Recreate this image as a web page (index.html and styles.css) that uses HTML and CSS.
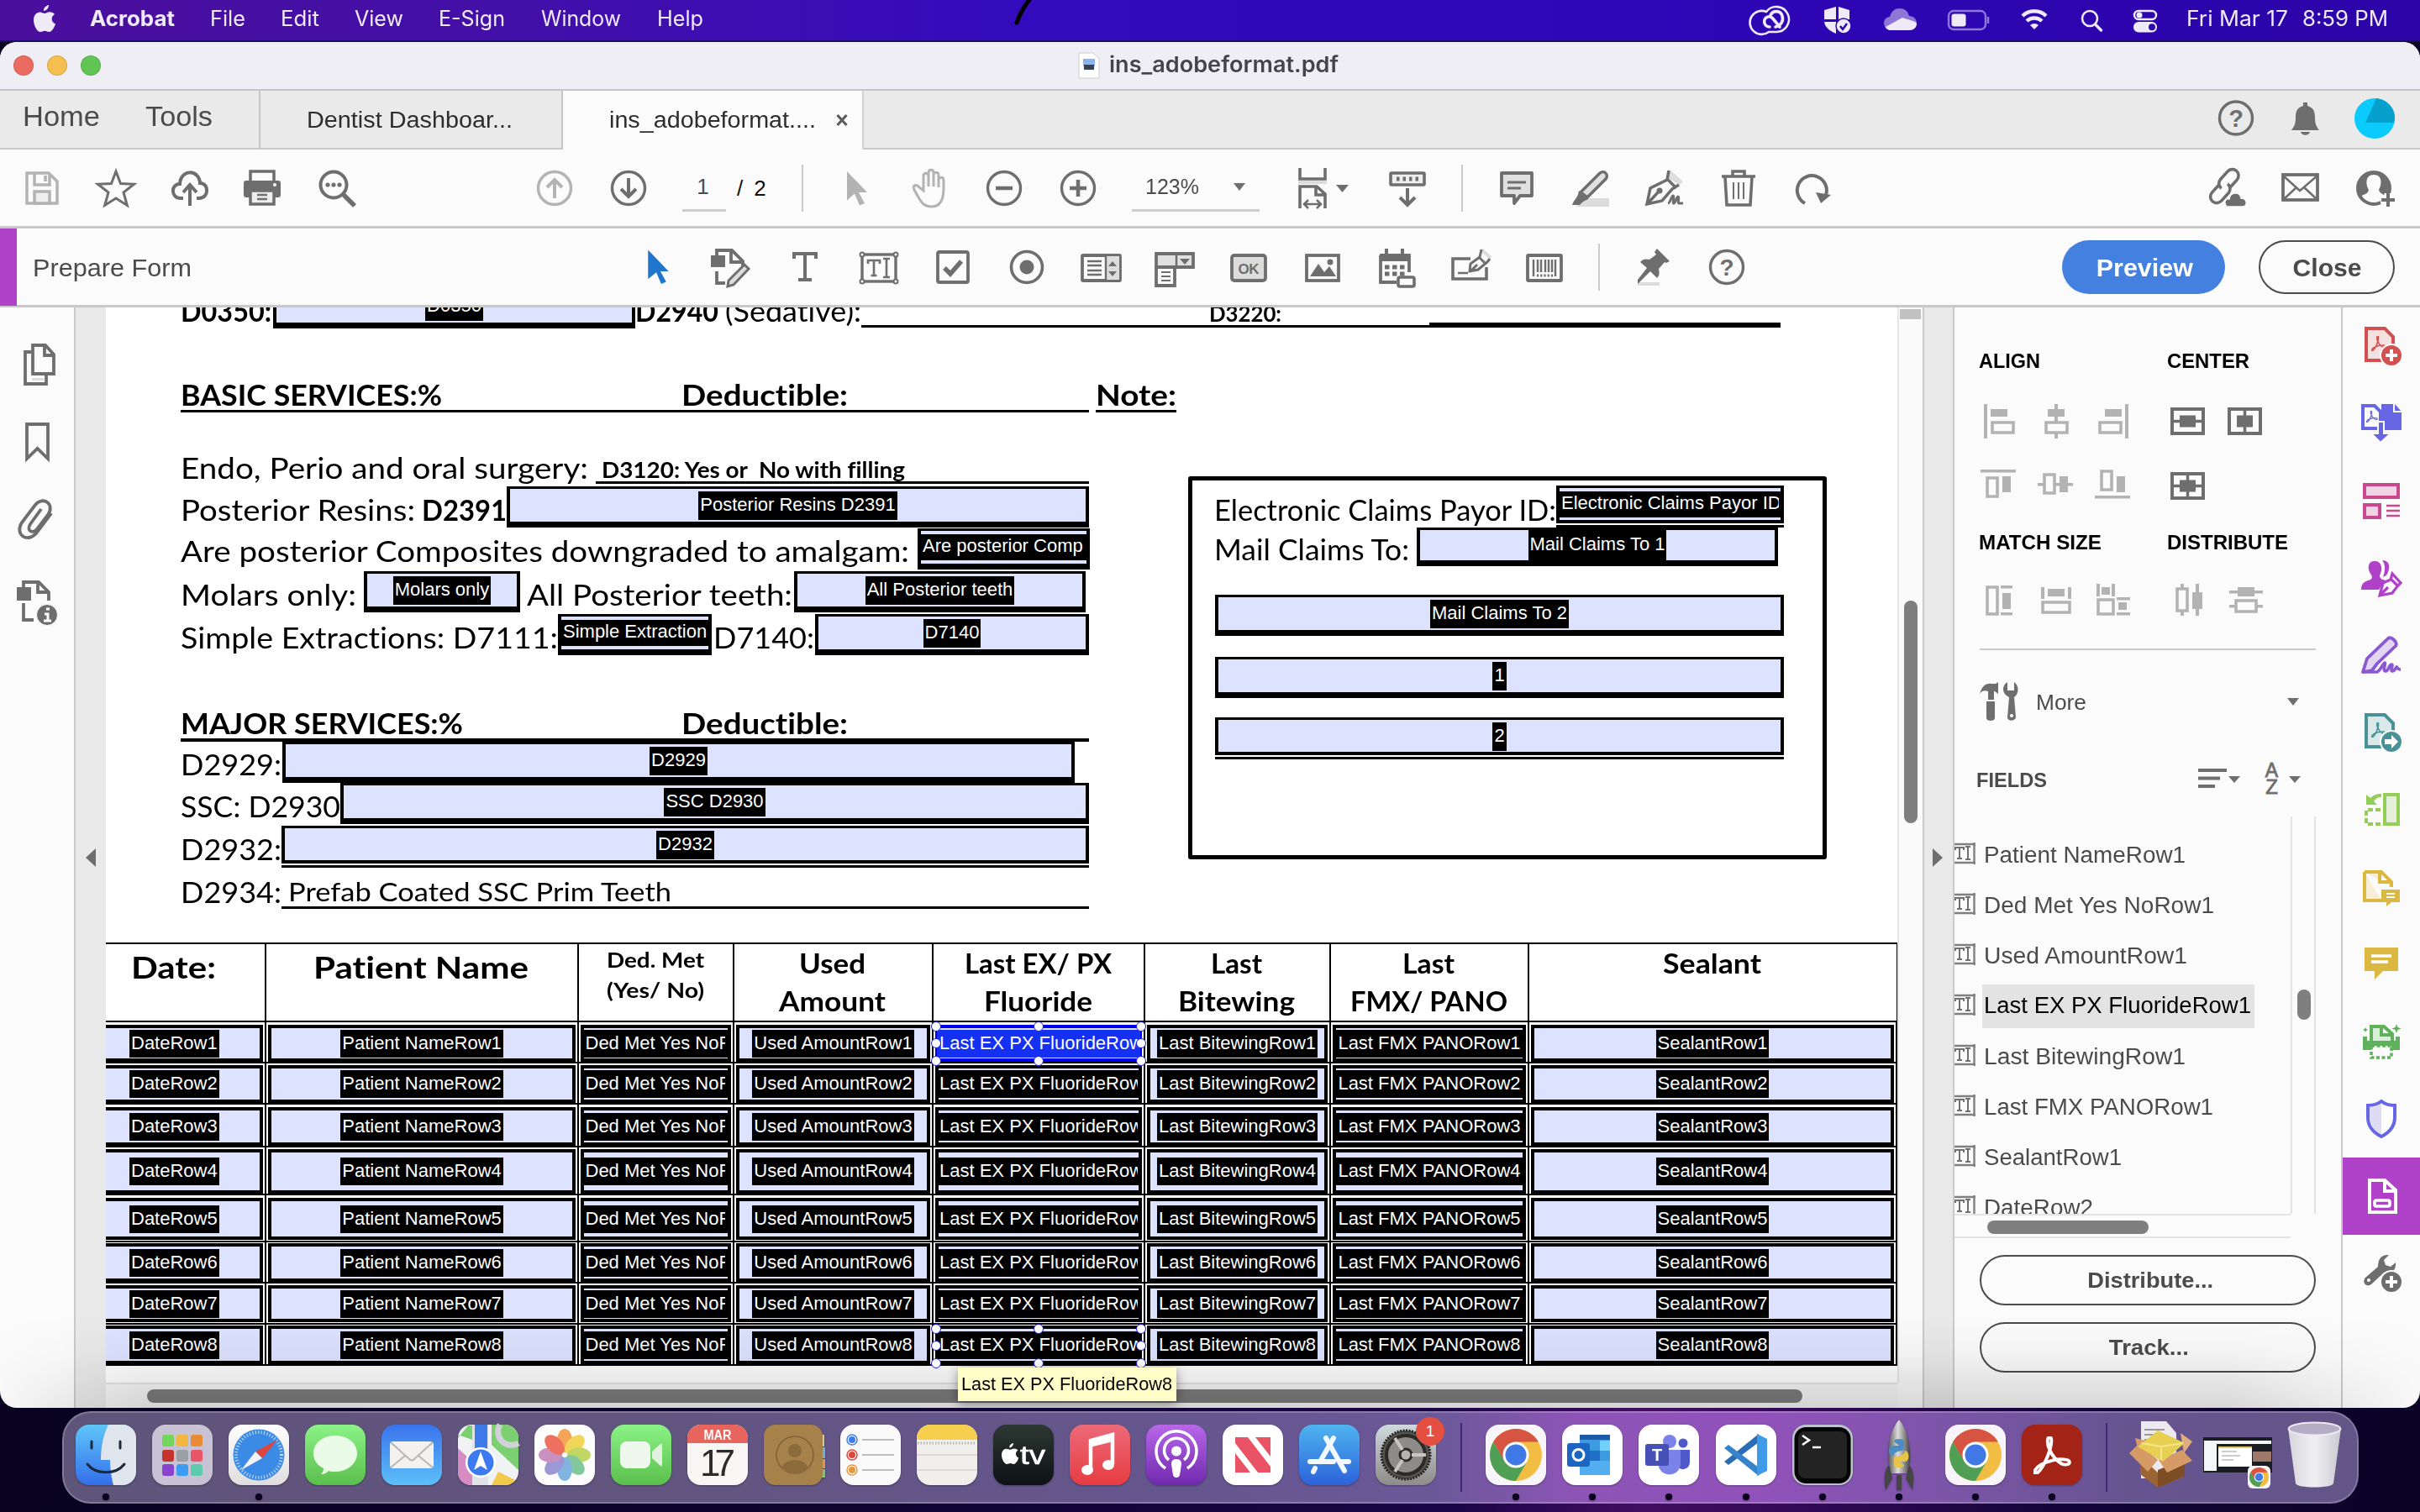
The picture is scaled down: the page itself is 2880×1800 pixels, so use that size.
FILE: index.html
```html
<!DOCTYPE html>
<html lang="en">
<head>
<meta charset="utf-8">
<title>ins_adobeformat.pdf</title>
<link rel="stylesheet" href="styles.css">
</head>
<body>
<svg class="defs" width="0" height="0">
  <defs>
    <symbol id="ti" viewBox="0 0 48 40"><g fill="none" stroke="#6e6e6e" stroke-width="3.4"><rect x="4" y="4" width="40" height="32"/></g><g fill="#fbfbfb" stroke="#6e6e6e" stroke-width="2"><circle cx="4" cy="4" r="2.5"/><circle cx="44" cy="4" r="2.5"/><circle cx="4" cy="36" r="2.5"/><circle cx="44" cy="36" r="2.5"/></g><path d="M11 15v-4h14v4M18 11v18M14.500 29h7M29 9h8M29 31h8M33 9v22" fill="none" stroke="#6e6e6e" stroke-width="2.600"/></symbol>
    <symbol id="til" viewBox="0 0 26 26"><path d="M0 2h25M0 24h25M23.500 0v26" fill="none" stroke="#808080" stroke-width="2.400"/><path d="M1 9V6h10v3M6 6v13M3 19h6M13 5h6M13 20h6M16 5v15" fill="none" stroke="#707070" stroke-width="2"/></symbol>
    <symbol id="acro" viewBox="0 0 44 44"><path d="M19 1c-4 0-3 9 0 15 3 7 9 13 14 16 5 2 9 0 9-2 0-4-12-4-20-2-8 2-17 6-20 11-2 3 0 5 3 3 5-4 11-16 14-26 2-7 3-15 0-15z" fill="none" stroke="currentColor" stroke-width="3.800"/></symbol>
    <symbol id="chrome" viewBox="0 0 72 72"><rect width="72" height="72" rx="16" fill="#f7f5fa"/><circle cx="36" cy="36" r="31" fill="#f1bd42"/><path d="M9.200 20.500A31 31 0 0 1 62.800 20.500H36L22.500 44z" fill="#d75342"/><path d="M9.200 20.500A31 31 0 0 0 36 67L49.400 43.700 36 51 22.600 43.700z" fill="#4f9f54"/><circle cx="36" cy="36" r="15.500" fill="#fff"/><circle cx="36" cy="36" r="12.500" fill="#4079e6"/></symbol>
    <linearGradient id="gBlue" x2="0" y2="1"><stop stop-color="#3a73ec"/><stop offset="1" stop-color="#5cc0f8"/></linearGradient>
    <linearGradient id="gBlue2" x2="0" y2="1"><stop stop-color="#4fb4f0"/><stop offset="1" stop-color="#2b62da"/></linearGradient>
    <linearGradient id="gFind" x2="0" y2="1"><stop stop-color="#5fc6f9"/><stop offset="1" stop-color="#346eea"/></linearGradient>
    <linearGradient id="gGreen" x2="0" y2="1"><stop stop-color="#8bf286"/><stop offset="1" stop-color="#5abf4c"/></linearGradient>
    <linearGradient id="gWhite" x2="0" y2="1"><stop stop-color="#fff"/><stop offset="1" stop-color="#dedede"/></linearGradient>
    <linearGradient id="gRed" x2="0" y2="1"><stop stop-color="#ec6a78"/><stop offset="1" stop-color="#e73c42"/></linearGradient>
    <linearGradient id="gPur" x2="0" y2="1"><stop stop-color="#b867e8"/><stop offset="1" stop-color="#7029ae"/></linearGradient>
    <linearGradient id="gDark" x2="0" y2="1"><stop stop-color="#2c3833"/><stop offset="1" stop-color="#0e1114"/></linearGradient>
    <linearGradient id="gTrash"><stop stop-color="#d5d5dc"/><stop offset=".5" stop-color="#f0f0f3"/><stop offset="1" stop-color="#c9c9d0"/></linearGradient>
    <linearGradient id="gGrey" x2="0" y2="1"><stop stop-color="#cfd9de"/><stop offset="1" stop-color="#8d8c89"/></linearGradient>
    <linearGradient id="gRocket"><stop stop-color="#555"/><stop offset=".45" stop-color="#ddd"/><stop offset="1" stop-color="#444"/></linearGradient>
  </defs>
</svg>

<header class="menubar">
  <svg class="apple" viewBox="0 0 26 32"><path d="M18 0c.3 3-2.600 7-6 7C11.500 4 14.500.500 18 0zM25 11c-5 3-4 9.500 1 11.500C24.500 27 21.500 32 18.500 32c-2 0-3-1.300-5.300-1.300S10 32 8 32C4 32 0 24 0 18 0 12 3.500 8.500 7.500 8.500c2.300 0 4 1.500 5.600 1.500S16.500 8.300 19.300 8.300c2.200 0 4.400 1.100 5.700 2.700z" fill="#efeaf8"/></svg>
  <b class="m1"><span data-w="101">Acrobat</span></b>
  <span class="m2"><span data-w="42">File</span></span>
  <span class="m3"><span data-w="46">Edit</span></span>
  <span class="m4"><span data-w="58">View</span></span>
  <span class="m5"><span data-w="79">E-Sign</span></span>
  <span class="m6"><span data-w="95">Window</span></span>
  <span class="m7"><span data-w="55">Help</span></span>
  <svg class="stroke" viewBox="0 0 30 34"><path d="M24 -4Q12 10 6 27" stroke="#000" stroke-width="5" fill="none" stroke-linecap="round"/></svg>
  <svg class="status" viewBox="2084 0 500 48" fill="none" stroke="#efeaf8">
    <path d="M2103 14a14 14 0 1 0 3 24h8a15 15 0 1 0-11-24z" stroke-width="2.600"/>
    <path d="M2107 32c-7 0-9-10-2-12 4-1 6 2 9 6l5 6M2108 18c3-6 12-6 14 1 2 6-2 12-8 13" stroke-width="3.600" stroke-linecap="round"/>
    <path d="M2186 8l-14 4v11h14zM2189 8v15h13V12zM2172 26h14v14c-9-4-13-8-14-14z" fill="#efeaf8" stroke="none"/>
    <circle cx="2195" cy="31" r="9" fill="#efeaf8" stroke="#2f05b0" stroke-width="1.500"/><path d="M2191 31l3 4 5-7" stroke="#2f05b0" stroke-width="2.500"/>
    <path d="M2243 27a7 7 0 0 1 7-7c2-7 6-10 12-10s10 4 11 9c6 0 9 4 9 9 0 5-4 8-9 8h-22c-5 0-8-4-8-9z" fill="#8d76d8" stroke="none"/><path d="M2245 32l20-11c4 2 17 4 17 7 0 5-4 8-9 8h-22c-3 0-5-2-6-4z" fill="#efeaf8" stroke="none"/>
    <rect x="2320" y="13" width="44" height="22" rx="6" stroke="#8f78d9" stroke-width="2.400"/><rect x="2323.500" y="16.500" width="17" height="15" rx="3" fill="#efeaf8" stroke="none"/><path d="M2367 20v8" stroke="#8f78d9" stroke-width="2.500"/>
    <path d="M2408 19a20 20 0 0 1 28 0M2413 25a13 13 0 0 1 18 0" stroke-width="4.500"/><path d="M2417 30a7 7 0 0 1 10 0l-5 5z" fill="#efeaf8" stroke="none"/>
    <circle cx="2488" cy="22" r="9" stroke-width="2.600"/><path d="M2494.500 29l7 7" stroke-width="3.400" stroke-linecap="round"/>
    <rect x="2541" y="13" width="26" height="10" rx="5" stroke-width="2.400"/><circle cx="2547" cy="18" r="3.500" fill="#efeaf8" stroke="none"/><rect x="2540" y="26" width="28" height="12.500" rx="6.200" fill="#efeaf8" stroke="none"/><circle cx="2562" cy="32.200" r="4" fill="#2f05b0" stroke="none"/>
  </svg>
  <span class="m8"><span data-w="121">Fri Mar 17</span></span>
  <span class="m9"><span data-w="102">8:59 PM</span></span>
</header>

<main class="window">
  <div class="titlebar">
    <div class="lights"><i class="r"></i><i class="y"></i><i class="g"></i></div>
    <svg class="docicon" viewBox="0 0 24 30"><path d="M0 0h17l7 7v23H0z" fill="#fff" stroke="#ccc"/><rect x="5" y="7" width="14" height="9" fill="#8fb4ea"/><rect x="6" y="14" width="12" height="6" fill="#3a4250"/></svg>
    <b><span data-w="273">ins_adobeformat.pdf</span></b>
  </div>
  <nav class="tabs">
    <div class="home"><span data-w="92">Home</span></div>
    <div class="tools"><span data-w="80">Tools</span></div>
    <div class="tab"><span data-w="245">Dentist Dashboar...</span></div>
    <div class="tab active"><span data-w="246">ins_adobeformat....</span><svg viewBox="0 0 14 14"><path d="M1.500 1l11 12M12.500 1l-11 12" stroke="#5a5a5a" stroke-width="3"/></svg></div>
    <svg class="tabicons" viewBox="2636 107 220 70"><circle cx="2661" cy="139.500" r="19.500" fill="none" stroke="#6e6e6e" stroke-width="3.400"/><text x="2661" y="150" text-anchor="middle" font-size="29" font-weight="700" fill="#6e6e6e">?</text><path d="M2741 121h5v4c8 2 9 8 9 14 0 8 2 11 5 15h-33c3-4 5-7 5-15 0-6 1-12 9-14zM2738 156h11c-1 5-10 5-11 0z" fill="#6e6e6e"/><circle cx="2826" cy="140" r="24" fill="#0bcbfd"/><path d="M2828 116l-13 29h34c4-13-5-27-21-29z" fill="#06a0cc"/></svg>
  </nav>

  <div class="bar" id="main-bar">
    <div class="icons a1">
      <svg viewBox="-44 -46 88 92"><g fill="none" stroke="#b3b3b3" stroke-width="3.500"><path d="M-18-18h26l10 10v26h-36z"/><path d="M-9-18v14h18v-12"/><path d="M4-15v7"/><rect x="-9" y="4" width="18" height="14" fill="#eee"/></g></svg>
      <svg viewBox="-44 -46 88 92"><path d="M0-20l5.500 14.500 16 .8-12.500 9.700 4.300 15.500L0 12l-13.300 8.500L-9 5l-12.500-9.700 16-.8z" fill="none" stroke="#6e6e6e" stroke-width="3" stroke-linejoin="miter"/></svg>
      <svg viewBox="-44 -46 88 92"><path d="M-8 12h-3c-12 0-12-17-1-17C-11-23 11-23 12-6c11 0 11 18-1 18H8M0 21V-3M-8 5l8-9 8 9" fill="none" stroke="#6e6e6e" stroke-width="4"/></svg>
      <svg viewBox="-42 -46 88 92"><rect x="-14" y="-20" width="28" height="14" fill="none" stroke="#6e6e6e" stroke-width="3.500"/><rect x="-22" y="-9" width="44" height="20" rx="3" fill="#6e6e6e"/><rect x="-14" y="3" width="28" height="16" fill="#eee" stroke="#6e6e6e" stroke-width="3.500"/><path d="M-6 8H6M-6 13H6" stroke="#6e6e6e" stroke-width="2.500"/><circle cx="15" cy="-4" r="2" fill="#fff"/></svg>
      <svg viewBox="-44 -46 88 92"><circle cx="-5" cy="-4" r="15.500" fill="none" stroke="#6e6e6e" stroke-width="4"/><path d="M7 8l13 13" stroke="#6e6e6e" stroke-width="5.500"/><g fill="#6e6e6e"><circle cx="-12" cy="-4" r="2.600"/><circle cx="-5" cy="-4" r="2.600"/><circle cx="2" cy="-4" r="2.600"/></g></svg>
    </div>
    <div class="icons a2">
      <svg viewBox="-44 -46 88 92"><g fill="none" stroke="#b3b3b3"><circle r="19.500" stroke-width="3.400"/><path d="M0 12v-22M-9-1l9-9 9 9" stroke-width="4"/></g></svg>
      <svg viewBox="-44 -46 88 92"><g fill="none" stroke="#6e6e6e"><circle r="19.500" stroke-width="3.400"/><path d="M0-12v22M-9 1l9 9 9-9" stroke-width="4"/></g></svg>
    </div>
    <div class="pageno">1</div><div class="pages"><span>/</span><span>2</span></div>
    <i class="sep s1"></i>
    <div class="icons a3">
      <svg viewBox="-44 -46 88 92"><path d="M-11-20L13 5H3l7 13-6 2.500-6-14-9 8z" fill="#b3b3b3"/></svg>
      <svg viewBox="-44 -46 88 92"><path d="M-9 3v-17c0-5 6-5 6 0v12-16c0-5 6-5 6 0v16-13c0-5 6-5 6 0v14-8c0-5 6-5 6 0 0 10 2 31-14 31-12 0-14-8-21-20-3-6 3-7 6-3z" transform="translate(1 0)" fill="none" stroke="#b3b3b3" stroke-width="3"/></svg>
      <svg viewBox="-44 -46 88 92"><g fill="none" stroke="#6e6e6e"><circle r="19.500" stroke-width="3.400"/><path d="M-10 0h20" stroke-width="4.500"/></g></svg>
      <svg viewBox="-44 -46 88 92"><g fill="none" stroke="#6e6e6e"><circle r="19.500" stroke-width="3.400"/><path d="M-10 0h20M0-10v20" stroke-width="4.500"/></g></svg>
    </div>
    <div class="zoom"><span data-w="64">123%</span><i class="dn"></i></div>
    <svg class="fit" viewBox="1540 178 70 92"><g fill="none" stroke="#6e6e6e" stroke-width="3.600"><path d="M1548 200v13h30v-13M1548 248v-26h20l10 9v17M1567 222v10h11"/><path d="M1552 243h22M1558 238l-5 5 5 5M1568 238l5 5-5 5" stroke-width="2.500"/></g><path d="M1546 217h34" stroke="#ddd" stroke-width="4"/><path d="M1591 220h15l-7.500 9z" fill="#6e6e6e"/></svg>
    <svg class="kbd" viewBox="1654 178 44 92"><rect x="1656" y="206" width="40" height="14" rx="1" fill="#eee" stroke="#6e6e6e" stroke-width="3.600"/><path d="M1663 213h26" stroke="#6e6e6e" stroke-width="5" stroke-dasharray="3.500 4"/><path d="M1676 224v19M1667 235l9 9 9-9" fill="none" stroke="#6e6e6e" stroke-width="4"/></svg>
    <i class="sep s2"></i>
    <div class="icons a4">
      <svg viewBox="-44 -46 88 92"><path d="M-18-18h36v27H4l-7 9v-9h-15z" fill="#e0e0e0" stroke="#6e6e6e" stroke-width="3.800" stroke-linejoin="round"/><path d="M-11-7h22M-11 0h16" stroke="#6e6e6e" stroke-width="2.800"/></svg>
      <svg viewBox="-44 -46 88 92"><path d="M-18 22l14-10h26v10z" fill="#dcdcdc"/><path d="M-12 5L11-18c5-4 11 2 7 7L-4 11z" fill="#e0e0e0" stroke="#6e6e6e" stroke-width="3.500"/><path d="M-14 3L-3 13l-6 3-4 4h-9c2-7 7-8 8-17z" fill="#6e6e6e"/></svg>
      <svg viewBox="-44 -46 88 92"><path d="M6-22l16 14-4 4L4-12z" fill="#ddd"/><path d="M5-21L3-10-17 0l-4 19 18-4L9 1l8-5M3-11L14 0M-20 18L-7 4" fill="none" stroke="#6e6e6e" stroke-width="3.500"/><circle cx="-6" cy="3" r="3.500" fill="#6e6e6e"/><path d="M4 18c3 0 4-9 6-9s-1 9 1 9 3-8 5-8-1 8 1 8h5" fill="none" stroke="#6e6e6e" stroke-width="3"/></svg>
      <svg viewBox="-44 -46 88 92"><g fill="none" stroke="#6e6e6e" stroke-width="3.600"><path d="M-20-14h40M-7-14v-6H7v6M-16-13l2 33h28l2-33"/><path d="M-6-7v20M0-7v20M6-7v20" stroke-width="2"/></g></svg>
      <svg viewBox="-44 -46 88 92"><path d="M-9 18A17.500 17.500 0 1 1 16 8" fill="none" stroke="#6e6e6e" stroke-width="4"/><path d="M4 5l18 3L10 18z" fill="#6e6e6e"/></svg>
    </div>
    <svg class="share" viewBox="2620 178 236 92"><g fill="none" stroke="#6e6e6e" stroke-width="3.600"><g transform="translate(2648 222) rotate(-48)"><path d="M-3-6h-12a7.500 7.500 0 0 0 0 15h13a7.500 7.500 0 0 0 7-8M3 6h13a7.500 7.500 0 0 0 0-15H3a7.500 7.500 0 0 0-7 8"/></g></g><path d="M2651 246c-5-7 0-10 3-9 1-9 13-9 14-1 8 0 8 10 2 10z" fill="#6e6e6e" stroke="#fbfbfb" stroke-width="1.500"/><g fill="none" stroke="#6e6e6e"><rect x="2718" y="208" width="41" height="30" stroke-width="3.800"/><path d="M2718 209l20 18 21-18M2718 238l16-15M2759 238l-16-15" stroke-width="2.500"/></g><circle cx="2826" cy="224" r="19" fill="#fbfbfb" stroke="#6e6e6e" stroke-width="4"/><path d="M2826 208c-10 0-10 11-6 18-1 6-8 5-10 9-9-15-1-30 16-30s25 15 15 30c-2-4-8-4-9-9 4-7 4-18-6-18z" fill="#6e6e6e"/><path d="M2834 238h20M2843 230v18" stroke="#fbfbfb" stroke-width="9"/><path d="M2835 238h16M2843 230v16" stroke="#6e6e6e" stroke-width="4"/></svg>
  </div>

  <div class="bar form-bar">
    <i class="accent"></i>
    <div class="pf"><span data-w="189">Prepare Form</span></div>
    <div class="icons b1">
      <svg viewBox="-44 -46 88 92"><path d="M-12-21L13 5H3l7 13-6 2.500-6-14-10 8z" fill="#2075cd"/></svg>
      <svg viewBox="-44 -46 88 92"><path d="M-24-14h17v14h-17z" fill="#6e6e6e"/><path d="M-17-14v-6h18l13 13v6M0-19v13h13M-17 5v14h10" fill="none" stroke="#6e6e6e" stroke-width="3.800"/><path d="M-3 16L16-3l5 5L3 21l-7 2z" fill="#ddd" stroke="#6e6e6e" stroke-width="3"/></svg>
      <svg viewBox="-44 -46 88 92"><path d="M-13-10v-6h26v6M0-16v31M-8 15H8" fill="none" stroke="#6e6e6e" stroke-width="4"/></svg>
      <svg viewBox="-44 -46 88 92"><use href="#ti" x="-24" y="-19" width="48" height="40"/></svg>
      <svg viewBox="-44 -46 88 92"><rect x="-18" y="-18" width="36" height="36" rx="2" fill="none" stroke="#6e6e6e" stroke-width="3.800"/><path d="M-10 1l7 7L10-7" fill="none" stroke="#6e6e6e" stroke-width="5.500"/></svg>
      <svg viewBox="-44 -46 88 92"><circle r="18.500" fill="none" stroke="#6e6e6e" stroke-width="3.600"/><circle r="8.500" fill="#6e6e6e"/></svg>
      <svg viewBox="-44 -46 88 92"><rect x="-22" y="-14" width="45" height="30" rx="1" fill="#fbfbfb" stroke="#6e6e6e" stroke-width="3.800"/><path d="M6-13h16v28H6z" fill="#ddd"/><path d="M6-14v30M-16-7H1M-16-2H1M-16 4H1M-16 9H1" stroke="#6e6e6e" stroke-width="2.400"/><path d="M9-1h10l-5-6zM9 5h10l-5 6z" fill="#6e6e6e"/></svg>
      <svg viewBox="-44 -46 88 92"><path d="M-22-16h44v16h-44z" fill="#e0e0e0" stroke="#6e6e6e" stroke-width="3.800"/><path d="M2-16V0" stroke="#6e6e6e" stroke-width="2.500"/><path d="M6-10h12l-6 7z" fill="#6e6e6e"/><path d="M-22 0v22h22V0" fill="none" stroke="#6e6e6e" stroke-width="3.800"/><path d="M-16 6H-5M-16 11H-5M-16 16H-5" stroke="#6e6e6e" stroke-width="2.200"/></svg>
      <svg viewBox="-44 -46 88 92"><rect x="-20" y="-14" width="40" height="30" rx="3" fill="#dcdcdc" stroke="#6e6e6e" stroke-width="3.800"/><text x="0" y="8" text-anchor="middle" font-size="17" font-weight="700" fill="#6e6e6e" textLength="25">OK</text></svg>
      <svg viewBox="-44 -46 88 92"><rect x="-19" y="-14" width="38" height="30" fill="none" stroke="#6e6e6e" stroke-width="3.800"/><path d="M-15 11L-5-4 2 6l6-7 8 12z" fill="#6e6e6e"/><circle cx="9" cy="-6" r="3.500" fill="#6e6e6e"/></svg>
      <svg viewBox="-44 -46 88 92"><path d="M-19-14h34V6M-19-14v32H0" fill="none" stroke="#6e6e6e" stroke-width="3.800"/><path d="M-20-16h36v9h-36z" fill="#6e6e6e"/><path d="M-12-22v8M7-22v8" stroke="#6e6e6e" stroke-width="4"/><path d="M-14 0h24M-14 8h24" stroke="#6e6e6e" stroke-width="5" stroke-dasharray="5.500 3.500"/><rect x="2" y="12" width="19" height="11" rx="2" fill="#fbfbfb" stroke="#6e6e6e" stroke-width="3.600"/></svg>
      <svg viewBox="-44 -46 88 92"><path d="M0-10h-21v24h40V0" fill="none" stroke="#6e6e6e" stroke-width="3.600"/><path d="M-15 7h12" stroke="#6e6e6e" stroke-width="2.500"/><path d="M10-22L4-10-2 5 11 1 20-9l4-3z" fill="#fbfbfb"/><path d="M13-21l11 10" stroke="#ddd" stroke-width="4"/><path d="M13-21l-2 9L0-4-1 5l10-2L20-6l3-4M10-12l8 8M1 4l7-7" fill="none" stroke="#6e6e6e" stroke-width="3"/></svg>
      <svg viewBox="-44 -46 88 92"><rect x="-20" y="-14" width="40" height="30" rx="1" fill="none" stroke="#6e6e6e" stroke-width="3.800"/><path d="M-13-9v20M-8-9v15M-4-9v15M1-9v15M5-9v15M9-9v15M13-9v20" stroke="#6e6e6e" stroke-width="2.400"/><path d="M-9 10h19" stroke="#6e6e6e" stroke-width="3" stroke-dasharray="2.200 2"/></svg>
    </div>
    <i class="sep s3"></i>
    <div class="icons b2">
      <svg viewBox="-44 -46 88 92"><path d="M-18 18H8v4h-26z" fill="#dcdcdc"/><path d="M5-22L20-7l-4 2-2-1-7 8c1 5 1 8-2 11L-3 5l-15 15v-5L-7 1l-8-7c3-4 7-4 11-3L4-15 2-18z" fill="#6e6e6e"/></svg>
      <svg viewBox="-44 -46 88 92"><circle r="19.500" fill="none" stroke="#6e6e6e" stroke-width="3.400"/><text y="10" text-anchor="middle" font-size="28" font-weight="700" fill="#6e6e6e">?</text></svg>
    </div>
    <button class="preview"><span data-w="115">Preview</span></button>
    <button class="close"><span data-w="82">Close</span></button>
  </div>

  <div class="body">
    <aside class="rail">
      <svg viewBox="0 0 89 1310"><g fill="none" stroke="#6e6e6e" stroke-width="3.800"><path d="M39 45h15l10 11v23H39zM53 45v12h11"/><path d="M37 53h-7v38h25v-11"/><path d="M32 139h25v41l-12.500-12L32 180z"/><path d="M48 246L35 264c-5 8 3 12 8 6l13-17c9-13-6-23-15-12L25 262c-9 14 6 25 17 13l18-24" transform="translate(1 -6)"/><path d="M28 333v-6h18l12 12v10M45 328v11h12M28 352v20h12"/></g><path d="M38 84h14v3H38z" fill="#ddd"/><path d="M20 333h17v16H20z" fill="#6e6e6e"/><circle cx="56" cy="366" r="12.500" fill="#6e6e6e" stroke="#fbfbfb" stroke-width="1"/><path d="M53 365h4v8M52 373h9M55 359h4" fill="none" stroke="#fff" stroke-width="3"/></svg>
    </aside>
    <div class="gutter left"><i></i></div>

    <div class="view">
      <section class="doc">
        <div class="ln top">
          <b data-w="108">D0350:</b>
          <div class="f w431"><em>D0350</em></div>
          <b data-w="99">D2940</b><span class="g8" data-w="162">(Sedative):</span>
          <div class="rule"><b class="sm" data-w="86">D3220:</b><i></i></div>
        </div>
        <div class="heads">
          <div class="ln head"><b data-w="311">BASIC SERVICES:%</b><b class="ded" data-w="198">Deductible:</b></div>
          <div class="ln note"><b data-w="96">Note:</b></div>
        </div>
        <div class="cols">
          <div class="colA">
            <div class="ln endo"><span data-w="485">Endo, Perio and oral surgery:</span><div class="ul"><b class="sm" data-w="361">D3120: Yes or&nbsp; No with filling</b></div></div>
            <div class="ln"><span data-w="279">Posterior Resins:</span><b class="g8x" data-w="101">D2391</b><div class="f grow"><em>Posterior Resins D2391</em></div></div>
            <div class="ln l2"><span data-w="867">Are posterior Composites downgraded to amalgam:</span><div class="f full w205"><em>Are posterior Comp</em></div></div>
            <div class="ln l3"><span data-w="209">Molars only:</span><div class="f g9 w186"><em>Molars only</em></div><span class="g8x" data-w="316">All Posterior teeth:</span><div class="f g2 w347"><em>All Posterior teeth</em></div></div>
            <div class="ln l4"><span data-w="449">Simple Extractions: D7111:</span><div class="f full w183"><em>Simple Extraction</em></div><span class="g2" data-w="120">D7140:</span><div class="f g1 grow"><em>D7140</em></div></div>
            <div class="ln head major"><b data-w="336">MAJOR SERVICES:%</b><b class="ded dd" data-w="198">Deductible:</b></div>
            <div class="ln m1r"><span data-w="120">D2929:</span><div class="f w943"><em>D2929</em></div></div>
            <div class="ln m2r"><span data-w="190">SSC: D2930</span><div class="f grow"><em>SSC D2930</em></div></div>
            <div class="ln m3r"><span data-w="120">D2932:</span><div class="f grow thin"><em>D2932</em></div></div>
            <div class="ln m4r"><span data-w="120">D2934:</span><div class="ul"><span class="md" data-w="456">Prefab Coated SSC Prim Teeth</span></div></div>
          </div>
          <div class="claims">
            <div class="ln c1"><span data-w="407">Electronic Claims Payor ID:</span><div class="f full grow thin"><em>Electronic Claims Payor ID</em></div></div>
            <div class="ln c2"><span data-w="232">Mail Claims To:</span><div class="f g9 w430"><em>Mail Claims To 1</em></div></div>
            <div class="ln c3"><div class="f grow"><em>Mail Claims To 2</em></div></div>
            <div class="ln c4"><div class="f grow"><em>1</em></div></div>
            <div class="ln c5"><div class="f grow thin"><em>2</em></div></div>
          </div>
        </div>

        <div class="table">
          <div class="tr th">
            <div class="big"><b data-w="101">Date:</b></div><div class="big"><b data-w="256">Patient Name</b></div>
            <div class="tiny"><b data-w="116">Ded. Met</b><b data-w="116">(Yes/ No)</b></div>
            <div><b data-w="79">Used</b><b data-w="127">Amount</b></div>
            <div><b data-w="175">Last EX/ PX</b><b data-w="129">Fluoride</b></div>
            <div><b data-w="61">Last</b><b data-w="139">Bitewing</b></div>
            <div><b data-w="62">Last</b><b data-w="187">FMX/ PANO</b></div>
            <div><b data-w="117">Sealant</b></div>
          </div>
          <div class="tr r1"><p><em>DateRow1</em></p><p><em>Patient NameRow1</em></p><p><em>Ded Met Yes NoRow1</em></p><p><em>Used AmountRow1</em></p><p class="sel on"><em>Last EX PX FluorideRow1</em><i></i><i></i><i></i><i></i><i></i><i></i><i></i><i></i></p><p><em>Last BitewingRow1</em></p><p><em>Last FMX PANORow1</em></p><p><em>SealantRow1</em></p></div>
          <div class="tr r2"><p><em>DateRow2</em></p><p><em>Patient NameRow2</em></p><p><em>Ded Met Yes NoRow2</em></p><p><em>Used AmountRow2</em></p><p><em>Last EX PX FluorideRow2</em></p><p><em>Last BitewingRow2</em></p><p><em>Last FMX PANORow2</em></p><p><em>SealantRow2</em></p></div>
          <div class="tr r3"><p><em>DateRow3</em></p><p><em>Patient NameRow3</em></p><p><em>Ded Met Yes NoRow3</em></p><p><em>Used AmountRow3</em></p><p><em>Last EX PX FluorideRow3</em></p><p><em>Last BitewingRow3</em></p><p><em>Last FMX PANORow3</em></p><p><em>SealantRow3</em></p></div>
          <div class="tr r4"><p><em>DateRow4</em></p><p><em>Patient NameRow4</em></p><p><em>Ded Met Yes NoRow4</em></p><p><em>Used AmountRow4</em></p><p><em>Last EX PX FluorideRow4</em></p><p><em>Last BitewingRow4</em></p><p><em>Last FMX PANORow4</em></p><p><em>SealantRow4</em></p></div>
          <div class="tr r5"><p><em>DateRow5</em></p><p><em>Patient NameRow5</em></p><p><em>Ded Met Yes NoRow5</em></p><p><em>Used AmountRow5</em></p><p><em>Last EX PX FluorideRow5</em></p><p><em>Last BitewingRow5</em></p><p><em>Last FMX PANORow5</em></p><p><em>SealantRow5</em></p></div>
          <div class="tr r6"><p><em>DateRow6</em></p><p><em>Patient NameRow6</em></p><p><em>Ded Met Yes NoRow6</em></p><p><em>Used AmountRow6</em></p><p><em>Last EX PX FluorideRow6</em></p><p><em>Last BitewingRow6</em></p><p><em>Last FMX PANORow6</em></p><p><em>SealantRow6</em></p></div>
          <div class="tr r7"><p><em>DateRow7</em></p><p><em>Patient NameRow7</em></p><p><em>Ded Met Yes NoRow7</em></p><p><em>Used AmountRow7</em></p><p><em>Last EX PX FluorideRow7</em></p><p><em>Last BitewingRow7</em></p><p><em>Last FMX PANORow7</em></p><p><em>SealantRow7</em></p></div>
          <div class="tr r8"><p><em>DateRow8</em></p><p><em>Patient NameRow8</em></p><p><em>Ded Met Yes NoRow8</em></p><p><em>Used AmountRow8</em></p><p class="sel"><em>Last EX PX FluorideRow8</em><i></i><i></i><i></i><i></i><i></i><i></i><i></i><i></i></p><p><em>Last BitewingRow8</em></p><p><em>Last FMX PANORow8</em></p><p><em>SealantRow8</em></p></div>
        </div>
      </section>
      <div class="hscroll"><i></i></div>
    </div>
    <div class="vscroll"><b></b><i></i></div>
    <div class="gutter right"><i></i></div>

    <aside class="panel">
      <div class="pair"><h4><span data-w="73">ALIGN</span></h4><h4><span data-w="98">CENTER</span></h4></div>
      <div class="grid">
        <svg viewBox="0 0 204 154"><g fill="#b3b3b3"><path d="M16 18h4v41h-4zM24 24h20v9H24z"/><path d="M100 18h4v41h-4zM92 24h20v9H92z"/><path d="M184 18h4v41h-4zM160 24h20v9h-20z"/><path d="M12 96h42v3.500H12zM38 104h10v19H38zM148 127h42v3.500h-42zM174 104h10v19h-10zM80 112h42v3.500H80zM106 104h10v19h-10z"/></g><g fill="#fbfbfb" stroke="#b3b3b3" stroke-width="3.600"><path d="M26 40h25v12H26zM90 40h25v12H90zM154 40h25v12h-25zM20 106h12v22H20zM88 102h12v22H88zM156 98h12v22h-12z"/></g></svg>
        <svg viewBox="0 0 204 154"><g fill="none" stroke="#6e6e6e" stroke-width="4"><path d="M16 24h37v29H16zM84 24h37v29H84zM16 101h37v29H16z"/><path d="M16 38.500h37M102.500 24v29M16 115.500h37M34.500 101v29" stroke-width="3.500"/></g><path d="M25 31.500h19v14H25zM93 31.500h19v14H93zM25 108.500h19v14H25z" fill="#6e6e6e"/></svg>
      </div>
      <div class="pair ms"><h4><span data-w="146">MATCH SIZE</span></h4><h4><span data-w="144">DISTRIBUTE</span></h4></div>
      <div class="grid g76">
        <svg viewBox="0 0 204 76"><g fill="#b3b3b3"><path d="M36 21h14v3.500H36zM36 53h14v3.500H36zM38 30h10v19H38zM84 23h4v14h-4zM116 23h4v14h-4zM92 25h20v9H92zM150 19h4v15h-4zM168 19h4v15h-4zM156 23h10v9h-10zM174 35h16v3.500h-16zM174 53h16v3.500h-16zM176 41h10v9h-10z"/></g><g fill="none" stroke="#b3b3b3" stroke-width="3.600"><path d="M20 23h12v32H20zM86 41h32v12H86zM152 38h18v17h-18z"/></g></svg>
        <svg viewBox="0 0 204 76"><g fill="#b3b3b3"><path d="M26 19h4v38h-4zM44 19h4v38h-4zM40 29h12v20H40zM84 27h40v3.500H84zM84 44h40v3.500H84zM94 23h20v11H94z"/></g><g fill="#fbfbfb" stroke="#b3b3b3" stroke-width="3.600"><path d="M22 25h12v26H22zM92 39h24v13H92z"/></g></svg>
      </div>
      <hr>
      <div class="more"><svg viewBox="0 0 46 46"><path d="M0 14C3 4 8 1 14 2h5l3-2v14l-4-3h-1v10h-7V11c-5-2-8 0-10 3zM8 23h10v20c0 4-10 4-10 0z" fill="#6e6e6e"/><path d="M33 0v10h8V0c6 4 6 14 0 18l2 24c-1 5-10 5-10 0l2-24c-9-4-9-14-2-18z" fill="#6e6e6e"/><circle cx="38" cy="40" r="2" fill="#fff"/></svg><span data-w="60">More</span><i class="dn"></i></div>
      <div class="fields-h"><h4><span data-w="84">FIELDS</span></h4><svg viewBox="0 0 124 40"><path d="M1 8h34M1 17.500h26M1 27h20" stroke="#6e6e6e" stroke-width="4"/><path d="M37 15h14l-7 8zM109 15h14l-7 8z" fill="#6e6e6e"/><text x="88.500" y="16" font-size="23" text-anchor="middle" fill="#6e6e6e" stroke="#6e6e6e" stroke-width=".8">A</text><text x="88.500" y="36" font-size="24" text-anchor="middle" fill="#6e6e6e" stroke="#6e6e6e" stroke-width=".8">Z</text></svg></div>
      <div class="listwrap">
        <ul>
          <li><svg><use href="#til"/></svg><span data-w="240">Patient NameRow1</span></li>
          <li><svg><use href="#til"/></svg><span data-w="274">Ded Met Yes NoRow1</span></li>
          <li><svg><use href="#til"/></svg><span data-w="242">Used AmountRow1</span></li>
          <li class="cur"><svg><use href="#til"/></svg><mark><span data-w="318">Last EX PX FluorideRow1</span></mark></li>
          <li><svg><use href="#til"/></svg><span data-w="240">Last BitewingRow1</span></li>
          <li><svg><use href="#til"/></svg><span data-w="273">Last FMX PANORow1</span></li>
          <li><svg><use href="#til"/></svg><span data-w="164">SealantRow1</span></li>
          <li><svg><use href="#til"/></svg><span data-w="130">DateRow2</span></li>
        </ul>
        <div class="lv"><i></i></div>
      </div>
      <div class="lh"><i></i></div>
      <button><span data-w="150">Distribute...</span></button>
      <button class="b2nd"><span data-w="95">Track...</span></button>
    </aside>

    <aside class="toolsbar">
      <svg viewBox="-46 -46 92 92"><path d="M-18-21h22l10 10v28h-32z" fill="#f6e1e1" stroke="#d2504f" stroke-width="4"/><use href="#acro" x="-12" y="-12" width="18" height="18" color="#d2504f"/><circle cx="12" cy="11" r="13" fill="#d2504f" stroke="#fbfbfb" stroke-width="2"/><path d="M5 11h14M12 4v14" stroke="#fff" stroke-width="4"/></svg>
      <svg viewBox="-46 -46 92 92"><path d="M0 8h24v-22l-8-9H0z" fill="#6767e6"/><path d="M15-24v10h10" fill="none" stroke="#fbfbfb" stroke-width="2"/><path d="M-22-21h14l7 7v20h-21z" fill="#fbfbfb" stroke="#6767e6" stroke-width="4"/><use href="#acro" x="-18" y="-15" width="14" height="14" color="#6767e6"/><path d="M-4-2h7v14h8L-1 23l-11-11h8z" fill="#6767e6" stroke="#fbfbfb" stroke-width="2"/></svg>
      <svg viewBox="-46 -46 92 92"><g fill="#f0d5e4" stroke="#c9488f" stroke-width="4"><rect x="-20" y="-19" width="40" height="15"/><rect x="-20" y="5" width="18" height="15"/></g><path d="M6 6h16M6 12h16M6 18h16" stroke="#c9488f" stroke-width="2.400"/></svg>
      <svg viewBox="-46 -46 92 92"><path d="M-8-20c9 0 10 10 6 17 0 3 2 5 7 6l-8 11h-21c0-10 7-10 11-12 3-2 2-4 0-7-4-7-3-15 5-15zM1-21c11 0 9 12 5 18l-4 2c3-8 3-15-1-20z" fill="#b041c9"/><path d="M13-5l-2 7-9 4-4 15 15-3 6-8 4-4zM12 2l7 7M-1 20L8 11" fill="#fbfbfb" stroke="#b041c9" stroke-width="3.200"/></svg>
      <svg viewBox="-46 -46 92 92"><path d="M-22 20l5-16L8-20c4-3 12 5 9 9L-5 10l-6 8z" fill="#e3d6f3" stroke="#8a59d1" stroke-width="3.800" stroke-linejoin="round"/><path d="M-22 20H-5c6-4 7-11 9-11s-3 10 1 10 4-8 7-8-2 8 1 8 4-4 5-5 0 3 5 3" fill="none" stroke="#8a59d1" stroke-width="3.600"/></svg>
      <svg viewBox="-46 -46 92 92"><path d="M-18-21h22l10 10v28h-32z" fill="#dbe8e9" stroke="#489297" stroke-width="4"/><use href="#acro" x="-12" y="-12" width="18" height="18" color="#489297"/><circle cx="12" cy="11" r="13" fill="#489297" stroke="#fbfbfb" stroke-width="2"/><path d="M4 8h8V3l8 8-8 8v-5H4z" fill="#fff"/></svg>
      <svg viewBox="-46 -46 92 92"><rect x="4" y="-18" width="16" height="35" fill="#e3f0d7" stroke="#94cd57" stroke-width="4"/><path d="M-1 0h-17v17h17" fill="none" stroke="#94cd57" stroke-width="4" stroke-dasharray="6 3"/><path d="M-18-18v12h13l-4-4c3-4 5-5 9-5v-4c-6 0-10 2-13 5z" fill="#94cd57"/></svg>
      <svg viewBox="-46 -46 92 92"><path d="M-20-18h20l12 12v6M-2-17v11h13M-20-18v34H0" fill="#f6eed6" stroke="#dab842" stroke-width="4"/><path d="M0 3h22v15H12l-6 5v-5H0z" fill="#dab842"/><path d="M6 8h10M6 12h10" stroke="#fff" stroke-width="2"/></svg>
      <svg viewBox="-46 -46 92 92"><path d="M-20-20h40V8H2l-10 10V8h-12z" fill="#dab842"/><path d="M-12-10h24M-12-3H8" stroke="#fff" stroke-width="3.500"/></svg>
      <svg viewBox="-46 -46 92 92"><path d="M-12 0v-18H3l10 9v9M0-17v9h12" fill="#d8efd8" stroke="#5fb15c" stroke-width="4"/><path d="M-22-6h5v5h34v-5h5V10h-44z" fill="#5fb15c"/><path d="M-12 5h24v14h-24z" fill="#fbfbfb" stroke="#5fb15c" stroke-width="3.500" stroke-dasharray="4 2.500"/><path d="M18-21l1.500 4 4 1.500-4 1.500-1.500 4-1.500-4-4-1.500 4-1.500zM-19-17l1 2 2 1-2 1-1 2-1-2-2-1 2-1z" fill="#5fb15c"/></svg>
      <svg viewBox="-46 -46 92 92"><path d="M0-21c5 4 10 5 16 5v14C16 9 10 16 0 21-10 16-16 9-16-2v-14c6 0 11-1 16-5z" fill="#fff" stroke="#6767e6" stroke-width="4"/><path d="M0-18C-5-15-9-14-14-14v12C-14 8-9 14 0 18z" fill="#dddcf4"/></svg>
      <svg class="active" viewBox="-46 -46 92 92"><path d="M-14-19H4l13 12v26h-31zM4-18v12h12" fill="none" stroke="#fff" stroke-width="4"/><rect x="-8" y="5" width="18" height="7" rx="2" fill="none" stroke="#fff" stroke-width="3.600"/></svg>
      <svg viewBox="-46 -46 92 92"><path d="M9-22l-6 6 2 6 6 2 6-5c1 12-9 14-14 12L-11 12c-6 6-13-1-8-7L-4-8C-4-16-1-23 9-22z" fill="#6e6e6e"/><circle cx="-15" cy="8" r="2" fill="#fff"/><circle cx="12" cy="10" r="13" fill="#6e6e6e" stroke="#fbfbfb" stroke-width="2"/><path d="M5 10h14M12 3v14" stroke="#fff" stroke-width="4"/></svg>
    </aside>
  </div>
  <div class="tip"><span data-w="251">Last EX PX FluorideRow8</span></div>
</main>

<footer class="dock">
  <div class="apps">
    <svg class="run" viewBox="0 0 72 72"><rect width="72" height="72" rx="16" fill="url(#gFind)"/><path d="M39 0h17a16 16 0 0 1 16 16v40a16 16 0 0 1-16 16H45c-2-8-4-18-4-30H30c0-16 3-30 9-42z" fill="#dfe5ec"/><path d="M19 20v8M53 20v8M14 47c10 13 34 13 44 0" fill="none" stroke="#1c2a3c" stroke-width="3" stroke-linecap="round"/></svg>
    <svg viewBox="0 0 72 72"><rect width="72" height="72" rx="16" fill="#c8c3d4"/><g><rect x="12" y="12" width="14" height="14" rx="3" fill="#72d65a"/><rect x="29" y="12" width="14" height="14" rx="3" fill="#f3b63f"/><rect x="46" y="12" width="14" height="14" rx="3" fill="#e98b35"/><rect x="12" y="30" width="14" height="14" rx="3" fill="#c6322d"/><rect x="29" y="30" width="14" height="14" rx="3" fill="#9aa0a6"/><rect x="46" y="30" width="14" height="14" rx="3" fill="#ea5567"/><rect x="12" y="47" width="14" height="14" rx="3" fill="#8a43cf"/><rect x="29" y="47" width="14" height="14" rx="3" fill="#3b9cf2"/><rect x="46" y="47" width="14" height="14" rx="3" fill="#5fcbae"/></g></svg>
    <svg class="run" viewBox="0 0 72 72"><rect width="72" height="72" rx="16" fill="url(#gWhite)"/><circle cx="36" cy="36" r="30.500" fill="#3b8be6"/><circle cx="36" cy="36" r="27" fill="none" stroke="#cfe4fb" stroke-width="4" stroke-dasharray="1 2.500"/><path d="M58 18L40 40l-8-8z" fill="#e0443b"/><path d="M15 54l17-22 8 8z" fill="#f3f3f3"/></svg>
    <svg viewBox="0 0 72 72"><rect width="72" height="72" rx="16" fill="url(#gGreen)"/><path d="M36 13c15 0 26 9 26 21S51 56 36 56c-3 0-6 0-8-1-3 3-6 4-9 4 2-2 3-4 3-7C14 48 10 42 10 34c0-12 11-21 26-21z" fill="#eafbe8"/></svg>
    <svg viewBox="0 0 72 72"><rect width="72" height="72" rx="16" fill="url(#gBlue)"/><rect x="10" y="20" width="52" height="32" rx="4" fill="#f3f2f0"/><path d="M11 21l22 20c2 2 4 2 6 0l22-20M11 51l17-14M61 51L44 37" fill="none" stroke="#b9b7b4" stroke-width="2"/></svg>
    <svg viewBox="0 0 72 72"><rect width="72" height="72" rx="16" fill="#f1f2f4"/><path d="M40 0h16a16 16 0 0 1 16 16v38L40 24z" fill="#7cd071"/><path d="M0 16L12 1h5v17L0 12z" fill="#7cd071"/><path d="M0 28l17 16v28C6 72 0 66 0 56z" fill="#d68bc3"/><path d="M17 0h19v72H17z" fill="#dfe2e6"/><path d="M20 0h15v30H20z" fill="#3e7be8"/><path d="M40 72l8-16 20 10c-4 5-8 6-14 6z" fill="#f1ca4c"/><path d="M50 0a16 16 0 0 0 22 22" fill="none" stroke="#cfd2d8" stroke-width="7"/><circle cx="27" cy="45" r="18" fill="#fff"/><circle cx="27" cy="45" r="15.500" fill="#3d7af0"/><path d="M27 32l8 22-8-5-8 5z" fill="#fff"/></svg>
    <svg viewBox="0 0 72 72"><rect width="72" height="72" rx="16" fill="#fcfcfd"/><g opacity=".86"><ellipse cx="36" cy="19" rx="9" ry="14" fill="#f2983a"/><ellipse cx="36" cy="19" rx="9" ry="14" fill="#f0d23f" transform="rotate(45 36 36)"/><ellipse cx="36" cy="19" rx="9" ry="14" fill="#b9d04d" transform="rotate(90 36 36)"/><ellipse cx="36" cy="19" rx="9" ry="14" fill="#6fc08a" transform="rotate(135 36 36)"/><ellipse cx="36" cy="19" rx="9" ry="14" fill="#6fa9de" transform="rotate(180 36 36)"/><ellipse cx="36" cy="19" rx="9" ry="14" fill="#8d88cf" transform="rotate(225 36 36)"/><ellipse cx="36" cy="19" rx="9" ry="14" fill="#c27fb6" transform="rotate(270 36 36)"/><ellipse cx="36" cy="19" rx="9" ry="14" fill="#ec5a45" transform="rotate(315 36 36)"/></g></svg>
    <svg viewBox="0 0 72 72"><rect width="72" height="72" rx="16" fill="url(#gGreen)"/><rect x="11" y="20" width="36" height="32" rx="8" fill="#eef8ed"/><path d="M49 32l10-9c1-1 2 0 2 1v24c0 1-1 2-2 1l-10-9z" fill="#e0f2de"/></svg>
    <svg viewBox="0 0 72 72"><rect width="72" height="72" rx="16" fill="#f7f6f5"/><path d="M0 22v-6A16 16 0 0 1 16 0h40a16 16 0 0 1 16 16v6z" fill="#e8655d"/><text x="36" y="18" text-anchor="middle" font-size="16" font-weight="700" fill="#fff" textLength="33" lengthAdjust="spacingAndGlyphs">MAR</text><text x="36" y="61" text-anchor="middle" font-size="44" fill="#2b2b2b" textLength="42">17</text></svg>
    <svg viewBox="0 0 72 72"><path d="M66 12h6v14h-6z" fill="#cfc8b8"/><path d="M66 27h7v13h-7z" fill="#6ab2d8"/><path d="M66 41h7v11h-7z" fill="#e29540"/><path d="M66 53h7v10h-7z" fill="#7fc36b"/><rect width="70" height="72" rx="14" fill="#a68149"/><g fill="none" stroke="#7e6136" stroke-width="1.500"><circle cx="37" cy="36" r="22"/></g><circle cx="37" cy="31" r="8" fill="#8b6b3c"/><path d="M21 52c4-13 28-13 32 0-9 8-23 8-32 0z" fill="#8b6b3c"/></svg>
    <svg viewBox="0 0 72 72"><rect width="72" height="72" rx="16" fill="#fbfafa"/><path d="M26 18h38M26 36h38M26 54h38" stroke="#bdbdc2" stroke-width="2"/><g stroke-width="1.500" fill="#fff"><circle cx="14" cy="18" r="6" stroke="#3d7cf0"/><circle cx="14" cy="36" r="6" stroke="#e0473c"/><circle cx="14" cy="54" r="6" stroke="#e9953a"/></g><circle cx="14" cy="18" r="4" fill="#3d7cf0"/><circle cx="14" cy="36" r="4" fill="#e0473c"/><circle cx="14" cy="54" r="4" fill="#e9953a"/></svg>
    <svg viewBox="0 0 72 72"><rect width="72" height="72" rx="16" fill="#f0efec"/><path d="M0 18v-2A16 16 0 0 1 16 0h40a16 16 0 0 1 16 16v2z" fill="#f6cf4f"/><path d="M0 36h72M0 54h72" stroke="#d5d4d0" stroke-width="1.500"/><path d="M1 22h70" stroke="#b8b6b0" stroke-width="3" stroke-dasharray="1.500 2"/></svg>
    <svg viewBox="0 0 72 72"><rect width="72" height="72" rx="16" fill="url(#gDark)"/><g transform="translate(10 22) scale(.78)"><path d="M18 0c.3 3-2.600 7-6 7C11.500 4 14.500.500 18 0zM25 11c-5 3-4 9.500 1 11.500C24.500 27 21.500 32 18.500 32c-2 0-3-1.300-5.300-1.300S10 32 8 32C4 32 0 24 0 18 0 12 3.500 8.500 7.500 8.500c2.300 0 4 1.500 5.600 1.500S16.500 8.300 19.300 8.300c2.200 0 4.400 1.100 5.700 2.700z" fill="#fff"/></g><text x="32" y="47" font-size="32" fill="#fff" stroke="#fff" stroke-width=".6" textLength="30" lengthAdjust="spacingAndGlyphs">tv</text></svg>
    <svg viewBox="0 0 72 72"><rect width="72" height="72" rx="16" fill="url(#gRed)"/><path d="M25 53V19l26-7v35" fill="none" stroke="#fff" stroke-width="4.500"/><path d="M24 18l28-7v9l-28 7z" fill="#fff"/><ellipse cx="21" cy="54" rx="7" ry="6" fill="#fff"/><ellipse cx="46" cy="48" rx="7" ry="6" fill="#fff"/></svg>
    <svg viewBox="0 0 72 72"><rect width="72" height="72" rx="16" fill="url(#gPur)"/><g fill="none" stroke="#fff" stroke-width="3.500"><path d="M23 52a24 24 0 1 1 26 0M27 42a14.500 14.500 0 1 1 18 0"/></g><circle cx="36" cy="31.500" r="6" fill="#fff"/><path d="M36 41c4 0 6 2 6 6l-2 13c-1 4-7 4-8 0l-2-13c0-4 2-6 6-6z" fill="#fff"/></svg>
    <svg viewBox="0 0 72 72"><rect width="72" height="72" rx="16" fill="#fff"/><path d="M15 15h15l27 35v7H42L15 22z" fill="#ea5265"/><path d="M39 15h18v23zM15 34v23h18z" fill="#ea5265"/></svg>
    <svg viewBox="0 0 72 72"><rect width="72" height="72" rx="16" fill="url(#gBlue2)"/><path d="M41 16L25 44M19 52l-2 4M32 16l22 39M13 44h28M50 44h9" fill="none" stroke="#f2f8ff" stroke-width="6" stroke-linecap="round"/></svg>
    <div class="badge-wrap"><svg viewBox="0 0 72 72"><rect width="72" height="72" rx="16" fill="url(#gGrey)"/><circle cx="36" cy="36" r="29" fill="#54534f" stroke="#22211f" stroke-width="3" stroke-dasharray="2 1.500"/><circle cx="36" cy="36" r="23" fill="#8d8c88" stroke="#2b2a28" stroke-width="4"/><circle cx="36" cy="36" r="7" fill="#b5b4b0" stroke="#2b2a28" stroke-width="3"/><path d="M43 36h17M32 30L23 16M32 42l-9 14" stroke="#c7c6c2" stroke-width="4"/></svg><span class="badge">1</span></div>
  </div>
  <i class="dsep"></i>
  <div class="apps second">
    <svg class="run" viewBox="0 0 72 72"><use href="#chrome" width="72" height="72"/></svg>
    <svg class="run" viewBox="0 0 72 72"><rect width="72" height="72" rx="16" fill="#fff"/><path d="M21 12h36v48H21z" fill="#3d9be2"/><path d="M21 12h36v6H21z" fill="#1d5ba8"/><path d="M45 19h12v12H45z" fill="#6fd0fa"/><path d="M33 31h12v12H33z" fill="#1f6fc6"/><path d="M21 43l36 0v17H21z" fill="#53aef0"/><rect x="6" y="22" width="27" height="28" rx="3" fill="#1c66c1"/><circle cx="19.500" cy="36" r="6.500" fill="none" stroke="#fff" stroke-width="3"/></svg>
    <svg class="run" viewBox="0 0 72 72"><rect width="72" height="72" rx="16" fill="#fff"/><circle cx="37" cy="20" r="8" fill="#7b83eb"/><circle cx="53" cy="22" r="5.500" fill="#5059c9"/><path d="M42 30h19v14c0 10-10 10-12 8z" fill="#5059c9"/><path d="M24 30h26v16c0 16-22 18-26 4z" fill="#7b83eb"/><rect x="8" y="23" width="28" height="26" rx="3" fill="#4650b5"/><text x="22" y="43" text-anchor="middle" font-size="20" font-weight="700" fill="#fff">T</text></svg>
    <svg class="run" viewBox="0 0 72 72"><rect width="72" height="72" rx="16" fill="#fff"/><path d="M10 44l5 4 36-27V11z" fill="#2a6db5"/><path d="M10 28l5-4 36 27v10z" fill="#3583ca"/><path d="M49 11l12 6v38l-12 6z" fill="#3f9be8"/></svg>
    <svg class="run" viewBox="0 0 72 72"><rect width="72" height="72" rx="16" fill="#b9c3c9"/><rect x="2.500" y="3" width="67" height="67" rx="14" fill="#050505"/><rect x="7" y="8" width="58" height="56" rx="8" fill="#232323"/><path d="M12 13l8 5.500-8 5.500M24 27h10" fill="none" stroke="#fff" stroke-width="2.600"/></svg>
    <svg class="run" viewBox="0 0 72 72"><path d="M36-6c10 12 14 30 13 50l-4 14H27l-4-14C22 24 26 6 36-6z" fill="url(#gRocket)"/><path d="M24 48c-6 6-6 16-4 30l8-14zM48 48c6 6 6 16 4 30l-8-14zM33 60h6v18h-6z" fill="#454545"/><path d="M30 20c0-4 12-4 12 0v8c0 5-12 2-12 9-8 0-8-12 0-12h6" fill="#4c8dc4"/><path d="M42 48c0 4-12 4-12 0v-7c0-5 13-2 13-10 6 1 6 13 0 13h-7" fill="#e8c446"/></svg>
    <svg class="run" viewBox="0 0 72 72"><use href="#chrome" width="72" height="72"/></svg>
    <svg class="run" viewBox="0 0 72 72"><rect width="72" height="72" rx="16" fill="#a32417"/><use href="#acro" x="14" y="14" width="45" height="45" color="#fff"/></svg>
  </div>
  <i class="dsep two"></i>
  <svg class="files" viewBox="2530 1680 270 100">
    <path d="M2549 1692h30l12 14v54h-42z" fill="#eceaf0"/><path d="M2553 1702h24M2553 1708h24M2553 1714h24" stroke="#999" stroke-width="2"/>
    <path d="M2548 1734l22 20 30-14v18l-31 13-21-16z" fill="#9c6434"/><path d="M2569 1750l32-13v20l-32 14z" fill="#7d4d26"/><path d="M2547 1718l22 20-12 14-22-22zM2570 1738l28-12 12 13-30 14zM2542 1712l12 3-8 14z" fill="#d59a66"/><path d="M2596 1706l14 10-10 14z" fill="#e0ac80"/><path d="M2545 1722l24-19 32 15-26 22z" fill="#e7cf52"/><path d="M2549 1718l24 4 26-4M2573 1722v16" stroke="#f5e68a" stroke-width="2" fill="none"/>
    <path d="M2623 1711h82v42h-82z" fill="#1a1d22"/><path d="M2624 1715h15v36h-15zM2639 1715h65v4h-65z" fill="#f5f6f8"/><path d="M2641 1722h40v24h-40z" fill="#fff"/><path d="M2641 1722h40v2h-40z" fill="#e2c76a"/><path d="M2645 1728h18M2645 1733h22M2645 1738h14" stroke="#b9bcc2" stroke-width="1.500"/><path d="M2682 1728h22v12h-22z" fill="#a0786a"/>
    <use href="#chrome" x="2676" y="1745" width="27" height="27"/>
    <path d="M2724 1700l9 66c1 6 44 6 45 0l9-66z" fill="url(#gTrash)"/><ellipse cx="2755.500" cy="1701" rx="31" ry="7.500" fill="#b5adc6" stroke="#eceaf0" stroke-width="2"/>
  </svg>
</footer>
<script src="fit.js"></script>
</body>
</html>
```
FILE: styles.css
```css
* { box-sizing: border-box; }
body { margin: 0; width: 2880px; height: 1800px; overflow: hidden; position: relative; font-family: "Liberation Sans", Arial, sans-serif; background: linear-gradient(90deg, #090321 0, #0d0430 35%, #1a0546 60%, #420d63 68%, #2b0850 77%, #12043a 85%, #0b0425 100%); color: #4b4b4b; }
svg { display: block; flex: none; overflow: visible; }
.defs { position: absolute; }
h4, p, ul, figure { margin: 0; padding: 0; }
em { font-style: normal; }
button { font-family: inherit; background: none; padding: 0; }
[data-w] { display: inline-block; white-space: nowrap; transform-origin: 0 50%; flex: none; }

/* menu bar */
.menubar { height: 50px; display: flex; align-items: center; padding: 0 0 4px 40px; font-family: Inter, "Liberation Sans", sans-serif; font-size: 25px; color: #efeaf8; background: linear-gradient(90deg, #4b0f9d 0, #430fa8 20%, #340bbc 42%, #2f06b8 65%, #2c04a8 100%); border-bottom: 2px solid #1d0a6a; }
.menubar .apple { width: 26px; height: 32px; }
.menubar b { margin-left: 41px; font-weight: 700; }
.m2 { margin-left: 42px; } .m3 { margin-left: 42px; } .m4 { margin-left: 42px; } .m5 { margin-left: 42px; } .m6 { margin-left: 43px; } .m7 { margin-left: 43px; }
.menubar .stroke { width: 30px; height: 34px; margin-left: 367px; align-self: flex-start; overflow: hidden; }
.menubar .status { width: 500px; height: 48px; margin-left: 849px; align-self: flex-start; }
.m8 { margin-left: 19px; } .m9 { margin-left: 17px; }

/* window */
.window { position: relative; height: 1626px; border-radius: 20px; overflow: hidden; background: #fbfbfb; display: flex; flex-direction: column; }
.window::after { content: ""; position: absolute; left: 0; right: 0; bottom: 0; height: 110px; background: linear-gradient(rgba(0,0,0,0), rgba(0,0,0,.03) 40%, rgba(0,0,0,.14)); -webkit-mask: linear-gradient(90deg, rgba(0,0,0,.1), #000 6%, #000 92%, rgba(0,0,0,.1)); pointer-events: none; }
.titlebar { height: 58px; background: #f0eef5; border-bottom: 2px solid #c6c4ca; display: flex; align-items: center; padding-left: 16px; font-family: Inter, sans-serif; font-size: 26px; color: #464449; }
.titlebar b { font-weight: 600; margin-left: 12px; padding-bottom: 4px; }
.lights { display: flex; gap: 16px; }
.lights i { width: 24px; height: 24px; border-radius: 50%; border: 1px solid rgba(0,0,0,.12); }
.lights .r { background: #ec6b60; } .lights .y { background: #f4bf4f; } .lights .g { background: #61c554; }
.docicon { width: 24px; height: 30px; margin-left: 1164px; }
.tabs { height: 70px; background: #eaeaea; display: flex; align-items: stretch; box-shadow: inset 0 -2px #c9c9c9; font-size: 27px; color: #2e2e2e; }
.tabs > div { display: flex; align-items: center; }
.home, .tools { font-size: 33.500px; color: #4b4b4b; padding-bottom: 8px; }
.home { padding-left: 27px; }
.tools { padding-left: 54px; width: 189px; }
.tabs .tab { width: 360px; border-left: 2px solid #c6c6c6; padding-left: 55px; }
.tabs .active { background: #fbfbfb; border-right: 2px solid #d2d2d2; width: 360px; }
.tab svg { width: 14px; height: 14px; margin-left: 24px; }
.tabicons { width: 220px; height: 70px; margin-left: 1608px; }

.bar { height: 94px; display: flex; align-items: center; border-bottom: 3px solid #c8c8c8; font-size: 26px; color: #4b4b4b; flex: none; }
.icons { display: flex; height: 92px; }
.icons svg { width: 88px; height: 92px; }
.a1 { margin-left: 6px; } .a2 { margin-left: 170px; }
.pageno { width: 52px; height: 56px; margin-left: 20px; text-align: center; line-height: 53px; border-bottom: 3px solid #ccc; padding-right: 3px; }
.pages { display: flex; gap: 13px; margin-left: 13px; color: #111; width: 78px; padding-top: 1px; }
.sep { width: 2px; height: 56px; background: #ccc; }
.a3 { margin-left: 19px; }
.s1 { margin-left: -1px; }
.zoom { width: 152px; height: 56px; margin-left: 20px; border-bottom: 3px solid #ccc; display: flex; align-items: center; padding-left: 16px; }
.dn { border: 7.500px solid transparent; border-top: 9px solid #6e6e6e; border-bottom: 0; }
.zoom .dn { margin-left: 41px; }
.fit { width: 70px; height: 92px; margin-left: 40px; }
.kbd { width: 44px; height: 92px; margin-left: 44px; }
.s2 { margin-left: 42px; }
.a4 { margin-left: 20px; }
.share { width: 236px; height: 92px; margin-left: 418px; }
.form-bar { position: relative; }
.accent { width: 20px; height: 92px; background: #b041c9; }
.pf { margin-left: 19px; font-size: 29px; padding-top: 4px; width: 701px; }
.b1 { flex: none; }
.b1 svg:first-child { width: 86px; margin-right: 0; }
.s3 { margin-left: 20px; }
.b2 { margin-left: 19px; }
.bar button { height: 64px; border-radius: 32px; font-size: 29px; font-weight: 700; display: flex; align-items: center; justify-content: center; padding: 4px 3px 0 0; }
.preview { width: 194px; background: #4480e0; color: #fff; border: 0; margin-left: 355px; }
.close { width: 162px; border: 2.500px solid #4b4b4b; color: #4b4b4b; margin-left: 40px; }

/* content */
.body { flex: 1; display: flex; min-height: 0; }
.rail { width: 90px; border-right: 2px solid #c9c9c9; }
.rail svg { width: 89px; height: 1310px; }
.gutter { width: 36px; background: #e9e9e9; display: flex; align-items: center; padding-bottom: 1px; }
.gutter i { border: 11px solid transparent; margin-left: 12px; }
.left i { border-right: 12px solid #6e6e6e; border-left: 0; }
.right { border: solid #c9c9c9; border-width: 0 2px; width: 38px; }
.right i { border-left: 12px solid #6e6e6e; border-right: 0; margin-left: 10px; }
.view { width: 2132px; background: #fff; display: flex; flex-direction: column; overflow: hidden; }
.hscroll { height: 30px; margin-top: auto; border-top: 2px solid #e3e3e3; background: #f7f7f7; padding: 6px 0 0 49px; flex: none; }
.hscroll i { display: block; width: 1970px; height: 16px; border-radius: 8px; background: #7d7d7d; }
.vscroll { width: 30px; border-left: 2px solid #e6e6e6; height: 1280px; background: #fafafa; }
.vscroll b { display: block; width: 25px; height: 12px; background: #c1c1c1; margin: 2px 0 0 1px; }
.vscroll i { display: block; width: 16px; height: 265px; border-radius: 8px; background: #7f7f7f; margin: 335px 0 0 6px; }

/* form page */
.doc { margin-top: -24px; color: #000; font-family: Lato, Carlito, sans-serif; font-size: 34.500px; font-variant-ligatures: none; }
.ln { display: flex; height: 50px; line-height: 55px; align-items: flex-start; }
.ln.top { margin-left: 89px; }
.ln.top > .f { margin-left: 2px; }
.sm { font-size: 26px; } .md { font-size: 31px; }
.f { height: 49px; border: 4px solid #000; border-width: 3px 4px 7px; background: #dde3ff; display: flex; justify-content: center; overflow: hidden; flex: none; min-width: 0; }
.f em { margin-top: 3px; height: 34px; padding: 0 2px; font: 22px/32px "Liberation Sans", sans-serif; background: #000; color: #fff; white-space: nowrap; flex: none; }
.full em { width: 100%; padding: 0; border: solid #000; border-width: 0 2px; overflow: hidden; margin-top: 4px; height: 31px; line-height: 28px; }
.f.grow { flex: 1; }
.w431 { width: 431px; } .w205 { width: 205px; margin-left: 10px; } .w186 { width: 186px; } .w347 { width: 347px; } .w183 { width: 183px; margin-left: 0; } .w943 { width: 943px; margin-left: 1px; } .w430 { width: 430px; }
.g8 { margin-left: 8px; } .g8x { margin-left: 8px; } .g9 { margin-left: 9px; } .g2 { margin-left: 2px; } .g1 { margin-left: 1px; }
.rule { width: 1094px; height: 48px; border-bottom: 3px solid #000; padding-left: 414px; display: flex; align-items: flex-end; line-height: 40px; }
.rule b { margin-bottom: -6px; }
.rule i { margin-left: auto; width: 418px; height: 3px; background: #000; }
.heads { display: flex; margin: 51px 0 0 89px; gap: 8px; }
.head, .note { height: 48px; border-bottom: 3px solid #000; line-height: 53px; }
.heads .head, .major { width: 1081px; }
.ded { margin-left: 285px; } .dd { margin-left: 260px; }
.cols { display: flex; margin-left: 89px; height: 631px; }
.colA { width: 1081px; padding-top: 38px; }
.ul { flex: 1; height: 47px; border-bottom: 3px solid #000; margin-left: 9px; padding-left: 7px; display: flex; }
.endo .ul { line-height: 61px; }
.l2, .l3 { height: 51px; }
.l2 { line-height: 53px; }
.l4 { height: 103px; }
.colA .major { height: 49px; line-height: 53px; border-bottom-width: 4px; }
.m1r { height: 49px; line-height: 53px; } .m2r { height: 51px; } .m3r { height: 51px; }
.m4r .ul { margin-left: 0; padding-left: 8px; height: 48px; }
.thin { border-bottom-width: 4px; height: 45px; overflow: visible; box-shadow: 0 2px #fff, 0 5px #000; }
.claims { width: 760px; height: 456px; margin: 76px 0 0 118px; border: 5px solid #000; border-radius: 3px; padding: 6px 46px 0 26px; }
.c1 { line-height: 58px; }
.c2 { height: 80px; line-height: 52px; }
.c2 .w430 { height: 46px; flex: none; }
.c2 em { margin-top: 0; height: 37px; line-height: 33px; }
.c3 { height: 74px; } .c4 { height: 72px; }
.c3, .c4, .c5 { padding-left: 1px; }

/* history table */
.table { font-size: 33px; }
.tr { display: grid; grid-template-columns: 191px 372px 185px 237px 252px 221px 236px 438px; border-bottom: 2px solid #000; }
.tr > * { border-right: 2px solid #000; }
.th { height: 95px; border-top: 2px solid #000; }
.th > div { display: flex; flex-direction: column; align-items: center; line-height: 45px; padding: 0 2px 0 0; }
.th > div:last-child { border-right-width: 1px; }
.th .big { font-size: 37px; padding-top: 4px; }
.th .tiny { font-size: 25.500px; line-height: 36px; }
.th > div:first-child { padding-right: 29px; }
.tr p { position: relative; display: flex; padding: var(--t) 2px var(--b, 0px); font: 22px/32px "Liberation Sans", sans-serif; }
.tr p::before { content: ""; position: absolute; inset: var(--t) 2px var(--b, 0px); border: 4px solid #000; background: #dde3ff; }
.tr p:first-child::before { left: 0; border-left: 0; }
.tr em { position: relative; margin: auto; padding: 0 2px; height: 33px; background: #000; color: #fff; white-space: nowrap; overflow: hidden; max-width: calc(100% - 6px); }
.tr p:first-child em { margin-left: 26px; }
.tr p:nth-child(3) em { width: 174px; max-width: none; padding: 0; border: solid #000; border-width: 0 5px 0 3px; }
.tr p:nth-child(5) em { width: 242px; max-width: none; padding: 0 0 0 3px; border-right: 3px solid #000; }
.r1 { height: 49px; --t: 3px; } .r2 { height: 49px; --t: 2px; } .r3 { height: 51px; --t: 3px; } .r4 { height: 57px; --t: 2px; } .r5 { height: 56px; --t: 3px; --b: 1px; } .r6 { height: 49px; --t: 1px; } .r7 { height: 49px; --t: 2px; --b: 1px; } .r8 { height: 49px; --t: 1px; }
.sel.on::before { border-color: #0000f0; }
.tr .sel.on em { background: #1430f2; border-color: #1430f2; }
.sel { z-index: 3; }
.sel i { position: absolute; width: 12px; height: 12px; border-radius: 50%; background: #fff; border: 1.500px solid #1a1ae0; left: -3px; top: -1px; }
.sel i:nth-of-type(2) { left: 119px; } .sel i:nth-of-type(3) { left: 241px; }
.sel i:nth-of-type(4) { top: 19px; } .sel i:nth-of-type(5) { top: 19px; left: 241px; }
.sel i:nth-of-type(6) { top: 40px; } .sel i:nth-of-type(7) { top: 40px; left: 119px; } .sel i:nth-of-type(8) { top: 40px; left: 241px; }
.tip { position: absolute; left: 1140px; top: 1578px; width: 260px; height: 40px; background: #fffec8; color: #000; font-size: 22px; line-height: 40px; padding-left: 4px; box-shadow: 0 3px 12px rgba(0,0,0,.4); z-index: 5; }

/* properties panel */
.panel { width: 460px; padding: 49px 0 0 30px; font-size: 25px; flex: none; }
.panel h4 { font-size: 23.500px; line-height: 30px; color: #000; }
.pair { display: grid; grid-template-columns: 224px 1fr; margin-left: -1px; }
.grid { display: flex; gap: 20px; margin: 18px 0 0 -11px; }
.grid svg { width: 204px; height: 154px; }
.grid.g76 { margin-top: 15px; } .g76 svg { height: 76px; }
.ms { margin-top: 14px; }
.panel hr { border: 0; height: 2px; background: #c9c9c9; margin: 20px 30px 0 0; }
.more { display: flex; align-items: center; height: 60px; margin-top: 31px; }
.more svg { width: 46px; height: 46px; } .more span { margin-left: 21px; padding-top: 3px; }
.more .dn { margin-left: 239px; }
.fields-h { display: flex; align-items: center; height: 40px; margin: 44px 0 0 -4px; }
.panel .fields-h h4 { color: #4b4b4b; }
.fields-h svg { width: 124px; height: 40px; margin-left: 179px; }
.listwrap { display: flex; height: 473px; margin: 23px 0 0 -30px; }
.panel ul { list-style: none; width: 400px; overflow: hidden; padding-top: 16px; font-size: 27px; }
.panel li { display: flex; align-items: center; height: 60px; }
.panel li svg { width: 26px; height: 26px; margin: -5px 9px 0 0; }
.cur mark { background: #e3e3e3; color: #000; height: 52px; display: flex; align-items: center; margin-left: -2px; padding: 0 4px 0 2px; margin-top: -1px; }
.lv { width: 30px; border: solid #e4e4e4; border-width: 0 2px; padding: 206px 0 0 6px; }
.lv i { display: block; width: 16px; height: 36px; border-radius: 8px; background: #7f7f7f; }
.lh { margin-left: -30px; width: 400px; height: 29px; border: solid #e4e4e4; border-width: 2px 0; padding: 6px 0 0 39px; }
.lh i { display: block; width: 192px; height: 16px; border-radius: 8px; background: #7f7f7f; }
.panel button { display: flex; align-items: center; justify-content: center; width: 400px; height: 60px; margin-top: 20px; border: 2px solid #4b4b4b; border-radius: 30px; font-size: 25.500px; font-weight: 700; color: #4b4b4b; padding-right: 5px; padding-top: 1px; }
.toolsbar { width: 94px; border-left: 2px solid #c9c9c9; }
.toolsbar svg { width: 92px; height: 92px; }
.toolsbar .active { background: #b041c9; }

/* dock */
.dock { position: absolute; left: 74px; top: 1680px; width: 2733px; height: 110px; border: 2px solid rgba(255,255,255,.22); border-radius: 34px; display: flex; padding: 14px 0 0 14px; background: linear-gradient(90deg, #5f547a 0, #625580 25%, #65568f 50%, #6c5899 60%, #8d54b6 66%, #9152bb 74%, #7c55a8 82%, #665490 90%, #625587 100%); }
.apps { display: flex; gap: 19px; height: 82px; }
.apps svg { width: 72px; height: 72px; filter: drop-shadow(0 1px 1px rgba(0,0,0,.3)); }
.apps svg.run { width: 72px; height: 92px; padding-bottom: 20px; background: radial-gradient(circle at 36px 86px, #0b0220 4px, transparent 4.500px) no-repeat; }
.badge-wrap { position: relative; }
.badge { position: absolute; right: -10px; top: -9px; width: 34px; height: 34px; border-radius: 50%; background: #e54f41; color: #fff; font: 19px/34px "Liberation Sans", sans-serif; text-align: center; }
.dsep { width: 2px; height: 82px; background: #412a74; margin: -2px 0 0 29px; }
.second { margin-left: 28px; gap: 19.200px; }
.dsep.two { margin-left: 28px; }
.files { width: 270px; height: 100px; margin: -16px 0 0 21px; }
```
FILE: fit.js
```js
// Condenses or widens each text run to the width given in data-w.
function fitRuns() {
  document.querySelectorAll('[data-w]').forEach(function (el) {
    var target = parseFloat(el.dataset.w);
    el.style.transform = '';
    el.style.width = '';
    var natural = el.getBoundingClientRect().width;
    el.style.width = target + 'px';
    el.style.transform = 'scaleX(' + target / natural + ')';
  });
}
fitRuns();
```
